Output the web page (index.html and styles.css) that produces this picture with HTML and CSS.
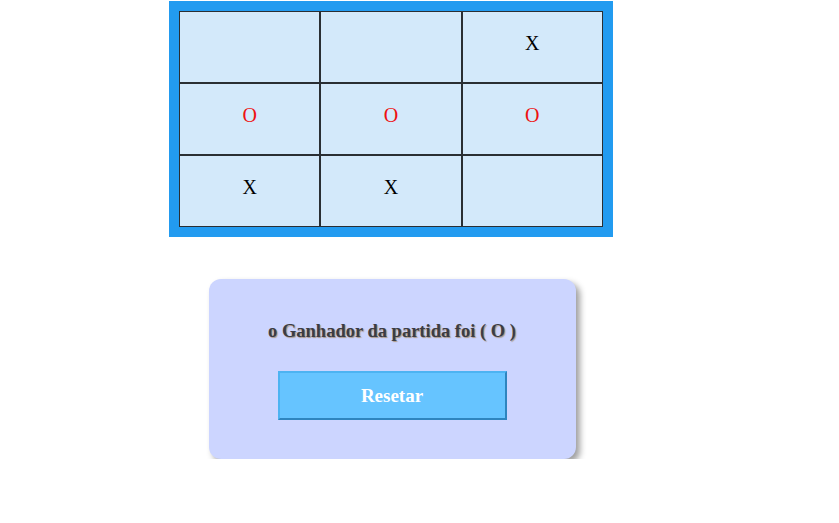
FILE: index.html
```html
<!DOCTYPE html>
<html lang="pt">
<head>
<meta charset="utf-8">
<title>Jogo da Velha</title>
<link rel="stylesheet" href="styles.css">
</head>
<body>
<div class="page">
  <div class="board-wrap">
    <table class="board">
      <tr><td></td><td></td><td class="x">X</td></tr>
      <tr><td class="o">O</td><td class="o">O</td><td class="o">O</td></tr>
      <tr><td class="x">X</td><td class="x">X</td><td></td></tr>
    </table>
  </div>
  <div class="card">
    <p class="result">o Ganhador da partida foi ( O )</p>
    <button class="reset">Resetar</button>
  </div>
</div>
</body>
</html>
```
FILE: styles.css
```css
html, body {
  margin: 0;
  padding: 0;
  background: #ffffff;
}
.page {
  width: 782px;
  padding-top: 1px;
  display: flex;
  flex-direction: column;
  align-items: center;
  font-family: "Liberation Serif", "DejaVu Serif", serif;
}
.board-wrap {
  background: #229bf0;
  padding: 10px;
  width: 424px;
}
.board {
  border-collapse: separate;
  border-spacing: 0;
  width: 424px;
  table-layout: fixed;
}
.board td {
  height: 62px;
  border: 1px solid #2a2f33;
  background: #d3e9fa;
  text-align: center;
  vertical-align: middle;
  font-size: 20px;
  padding: 0 0 8px 0;
}
.board td.x { color: #000000; }
.board td.o { color: #ee1111; }
.card {
  margin-top: 42px;
  margin-left: 2px;
  width: 367px;
  height: 180px;
  box-sizing: border-box;
  background: #ccd5ff;
  border-radius: 12px;
  box-shadow: 4px 4px 6px rgba(0, 0, 0, 0.38);
  display: flex;
  flex-direction: column;
  align-items: center;
}
.result {
  margin: 41px 0 0 0;
  font-size: 18.5px;
  font-weight: bold;
  color: #3b3c44;
  text-shadow: 1px 1px 1px rgba(150, 110, 50, 0.6);
  line-height: 22px;
}
.reset {
  margin-top: 29px;
  width: 229px;
  height: 49px;
  background: #66c4ff;
  border: 2px solid;
  border-color: #4db3f2 #2e85bf #2e85bf #4db3f2;
  color: #ffffff;
  font-family: "Liberation Serif", "DejaVu Serif", serif;
  font-weight: bold;
  font-size: 19px;
  padding: 0;
}
```
